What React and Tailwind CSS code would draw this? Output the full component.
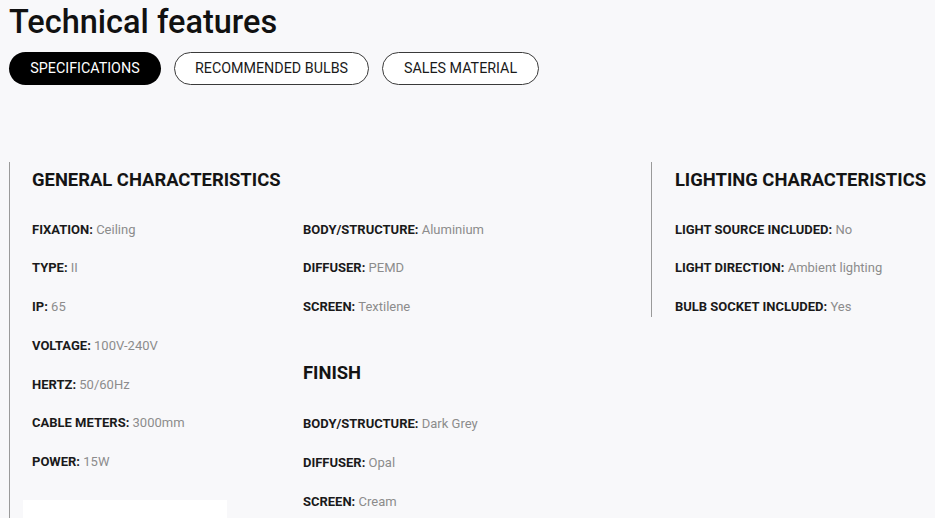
const general = [
  ['FIXATION', 'Ceiling'],
  ['TYPE', 'II'],
  ['IP', '65'],
  ['VOLTAGE', '100V-240V'],
  ['HERTZ', '50/60Hz'],
  ['CABLE METERS', '3000mm'],
  ['POWER', '15W'],
];

const body = [
  ['BODY/STRUCTURE', 'Aluminium'],
  ['DIFFUSER', 'PEMD'],
  ['SCREEN', 'Textilene'],
];

const finish = [
  ['BODY/STRUCTURE', 'Dark Grey'],
  ['DIFFUSER', 'Opal'],
  ['SCREEN', 'Cream'],
];

const lighting = [
  ['LIGHT SOURCE INCLUDED', 'No'],
  ['LIGHT DIRECTION', 'Ambient lighting'],
  ['BULB SOCKET INCLUDED', 'Yes'],
];

function Heading({ children, className = '' }) {
  return (
    <h3 className={`text-[18.4px] leading-[22px] font-bold text-[#141414] whitespace-nowrap ${className}`}>
      {children}
    </h3>
  );
}

function Items({ rows }) {
  return (
    <ul className="flex flex-col gap-[18.8px]">
      {rows.map(([label, value], i) => (
        <li key={i} className="h-[20px] leading-[20px] text-[13px] whitespace-nowrap">
          <span className="font-bold text-[#1a1a1a]">{label}:</span>{' '}
          <span className="text-[#8c8c8c]">{value}</span>
        </li>
      ))}
    </ul>
  );
}

export default function App() {
  const tabs = [
    { label: 'SPECIFICATIONS', w: 'w-[152px]', active: true },
    { label: 'RECOMMENDED BULBS', w: 'w-[195px]' },
    { label: 'SALES MATERIAL', w: 'w-[157px]' },
  ];

  return (
    <div className="min-h-[518px] h-[518px] overflow-hidden bg-[#f8f8fa] px-[9px] pt-[4px] font-['Roboto',sans-serif]">
      <h1 className="text-[32.5px] leading-[37px] font-medium text-[#111]">Technical features</h1>

      <div className="mt-[11px] flex gap-[13px]">
        {tabs.map(t => (
          <button
            key={t.label}
            className={`${t.w} h-[33px] rounded-full text-[14.3px] flex items-center justify-center ${
              t.active ? 'bg-black text-white' : 'border border-[#3a3a3a] text-[#1a1a1a] bg-white'
            }`}
          >
            {t.label}
          </button>
        ))}
      </div>

      <div className="mt-[77px] flex items-start">
        <div className="w-[294px] border-l border-[#9a9a9a] pl-[22px] pt-[7px]">
          <Heading>GENERAL CHARACTERISTICS</Heading>
          <div className="mt-[28.5px]">
            <Items rows={general} />
          </div>
          <div className="mt-[28px] -ml-[9px] w-[204px] h-[60px] bg-white"></div>
        </div>

        <div className="w-[348px] pt-[7px]">
          <div className="h-[22px]"></div>
          <div className="mt-[28.5px]">
            <Items rows={body} />
          </div>
          <Heading className="mt-[45px]">FINISH</Heading>
          <div className="mt-[30px]">
            <Items rows={finish} />
          </div>
        </div>

        <div className="border-l border-[#9a9a9a] pl-[23px] pt-[7px]">
          <Heading>LIGHTING CHARACTERISTICS</Heading>
          <div className="mt-[28.5px]">
            <Items rows={lighting} />
          </div>
        </div>
      </div>
    </div>
  );
}
